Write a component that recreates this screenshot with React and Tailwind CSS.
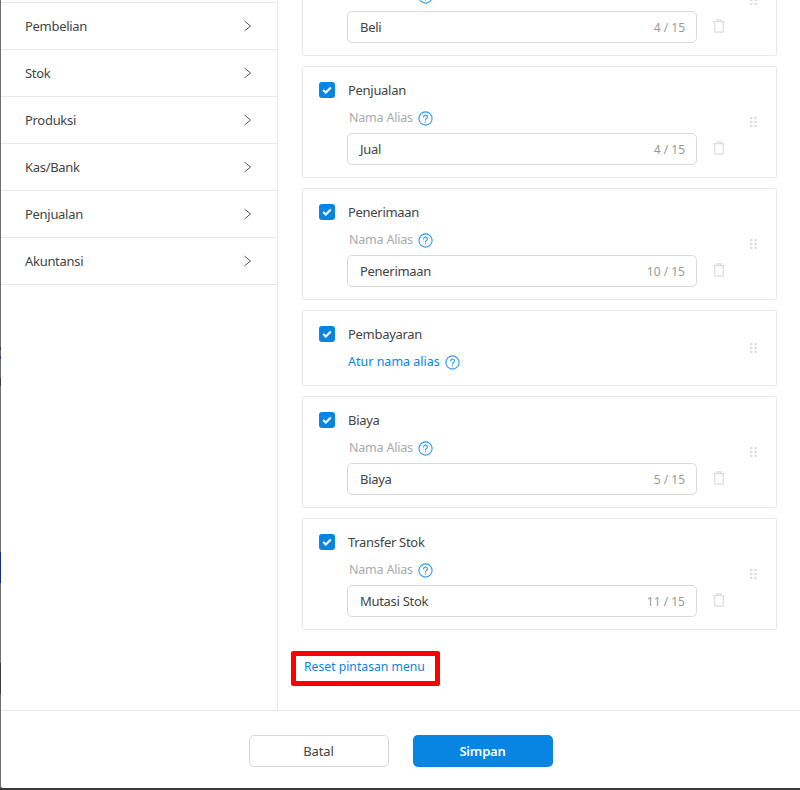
import React from 'react';

const menus = ['Pembelian', 'Stok', 'Produksi', 'Kas/Bank', 'Penjualan', 'Akuntansi'];

const shortcuts = [
  { name: 'Pembelian', alias: 'Beli', count: '4 / 15' },
  { name: 'Penjualan', alias: 'Jual', count: '4 / 15' },
  { name: 'Penerimaan', alias: 'Penerimaan', count: '10 / 15' },
  { name: 'Pembayaran' },
  { name: 'Biaya', alias: 'Biaya', count: '5 / 15' },
  { name: 'Transfer Stok', alias: 'Mutasi Stok', count: '11 / 15' },
];

const Help = () => (
  <svg width="15" height="15" viewBox="0 0 15 15" fill="none" className="shrink-0">
    <circle cx="7.5" cy="7.5" r="6.6" stroke="#2f9bea" strokeWidth="1.1" />
    <path d="M5.6 5.9a1.9 1.9 0 1 1 2.9 1.6c-.7.4-1 .8-1 1.5" stroke="#2f9bea" strokeWidth="1.1" strokeLinecap="round" />
    <circle cx="7.5" cy="10.9" r=".7" fill="#2f9bea" />
  </svg>
);

const Trash = () => (
  <svg width="12" height="14" viewBox="0 0 12 14" fill="none" stroke="#dcdcdc" strokeWidth="1.2" className="shrink-0 -mt-[2px]">
    <path d="M.5 2.6h11M4 2.4V.9h4v1.5M1.7 2.8v9.4c0 .6.4 1 1 1h6.6c.6 0 1-.4 1-1V2.8" />
  </svg>
);

const Grip = () => (
  <svg width="7" height="10" viewBox="0 0 7 10" fill="#dddddd" className="shrink-0 -mt-[4px]">
    <rect x="0" y="0" width="2.4" height="2.2" />
    <rect x="4.4" y="0" width="2.4" height="2.2" />
    <rect x="0" y="3.9" width="2.4" height="2.2" />
    <rect x="4.4" y="3.9" width="2.4" height="2.2" />
    <rect x="0" y="7.8" width="2.4" height="2.2" />
    <rect x="4.4" y="7.8" width="2.4" height="2.2" />
  </svg>
);

const Check = () => (
  <div className="w-4 h-4 rounded-[3px] bg-[#0884e3] flex items-center justify-center shrink-0">
    <svg width="10" height="8" viewBox="0 0 10 8" fill="none">
      <path d="M1.2 4l2.6 2.5 5-5" stroke="#fff" strokeWidth="2" />
    </svg>
  </div>
);

const ShortcutCard = ({ item }) => (
  <div className="flex items-center border border-[#e8e8e8] rounded-[2px] pl-4 pr-[19px] pt-[15px] pb-3">
    <div className="flex-1">
      <div className="flex items-center gap-[13px] h-4">
        <Check />
        <span className="text-[13px] tracking-[-0.3px] text-[#444444] pt-px">{item.name}</span>
      </div>
      {item.alias ? (
        <div className="ml-7 mt-[11px]">
          <div className="flex items-center gap-[5px] h-[18px] ml-[2px] text-[12.5px] tracking-[-0.2px] text-[#aaaaaa]">
            Nama Alias <Help />
          </div>
          <div className="flex items-center gap-4 mt-[6px]">
            <div className="w-[350px] h-8 border border-[#d9d9d9] rounded-[5px] flex items-center justify-between pl-3 pr-[11px]">
              <span className="text-[13px] tracking-[-0.3px] text-[#444444] pt-px">{item.alias}</span>
              <span className="text-[12px] text-[#999999] pt-px">{item.count}</span>
            </div>
            <Trash />
          </div>
        </div>
      ) : (
        <div className="ml-[29px] mt-[11px] mb-[2px] flex items-center gap-[5px] h-[18px] text-[12.5px] text-[#0884e3]">
          Atur nama alias <Help />
        </div>
      )}
    </div>
    <Grip />
  </div>
);

export default function App() {
  return (
    <div className="w-[800px] h-[790px] flex flex-col overflow-hidden bg-[#3a3a3a] font-['Noto_Sans',sans-serif]">
      <div className="flex flex-1 min-h-0">
        {/* dimmed page behind the modal */}
        <div className="w-px bg-[#6e6e6e] flex flex-col shrink-0">
          <div className="h-[347px]" />
          <div className="h-[3px] bg-[#3d3d3d]" />
          <div className="h-[6px]" />
          <div className="h-[3px] bg-[#1f3f80]" />
          <div className="h-[19px]" />
          <div className="h-2 bg-[#3d3d3d]" />
          <div className="h-[166px]" />
          <div className="h-[31px] bg-[#12337c]" />
          <div className="h-[80px]" />
          <div className="h-[31px] bg-[#3d3d3d]" />
        </div>

        <div className="flex-1 min-w-0 bg-white flex flex-col rounded-bl-[2px]">
          <div className="h-[710px] flex overflow-hidden">
            {/* Menu list */}
            <div className="w-[276px] shrink-0 border-r border-[#e8e8e8] box-content">
              <div className="h-[2px] border-b border-[#e8e8e8] box-content" />
              {menus.map((m) => (
                <div key={m} className="h-[47px] border-b border-[#e8e8e8] flex items-center justify-between pl-6 pr-[25px]">
                  <span className="text-[13px] tracking-[-0.3px] text-[#444444] pt-px">{m}</span>
                  <svg width="9" height="12" viewBox="0 0 9 12" fill="none" stroke="#555555" strokeWidth="1">
                    <path d="M1.5 1l6 5-6 5" />
                  </svg>
                </div>
              ))}
            </div>

            {/* Shortcut cards */}
            <div className="flex-1 min-w-0 pl-6 pr-[23px]">
              <div className="flex flex-col gap-[10px] -mt-[56px]">
                {shortcuts.map((s) => (
                  <ShortcutCard key={s.name} item={s} />
                ))}
              </div>
              <div className="mt-[21px] -ml-[11px] w-[149px] h-[35px] border-[5px] border-[#ff0000] rounded-[2px] flex items-center pl-2 pb-[3px]">
                <span className="text-[12.2px] text-[#0884e3] whitespace-nowrap">Reset pintasan menu</span>
              </div>
            </div>
          </div>

          {/* Footer */}
          <div className="flex-1 border-t border-[#e8e8e8] flex items-center justify-center gap-6 pt-[2px]">
            <button className="w-[140px] h-8 border border-[#d9d9d9] rounded-[5px] bg-white text-[13px] tracking-[-0.1px] text-[#444444] pt-[3px]">Batal</button>
            <button className="w-[140px] h-8 rounded-[5px] bg-[#0884e3] text-[13px] tracking-[-0.2px] font-semibold text-white pt-[3px]">Simpan</button>
          </div>
        </div>
      </div>
      <div className="h-[2px] shrink-0 bg-[#3a3a3a]" />
    </div>
  );
}
